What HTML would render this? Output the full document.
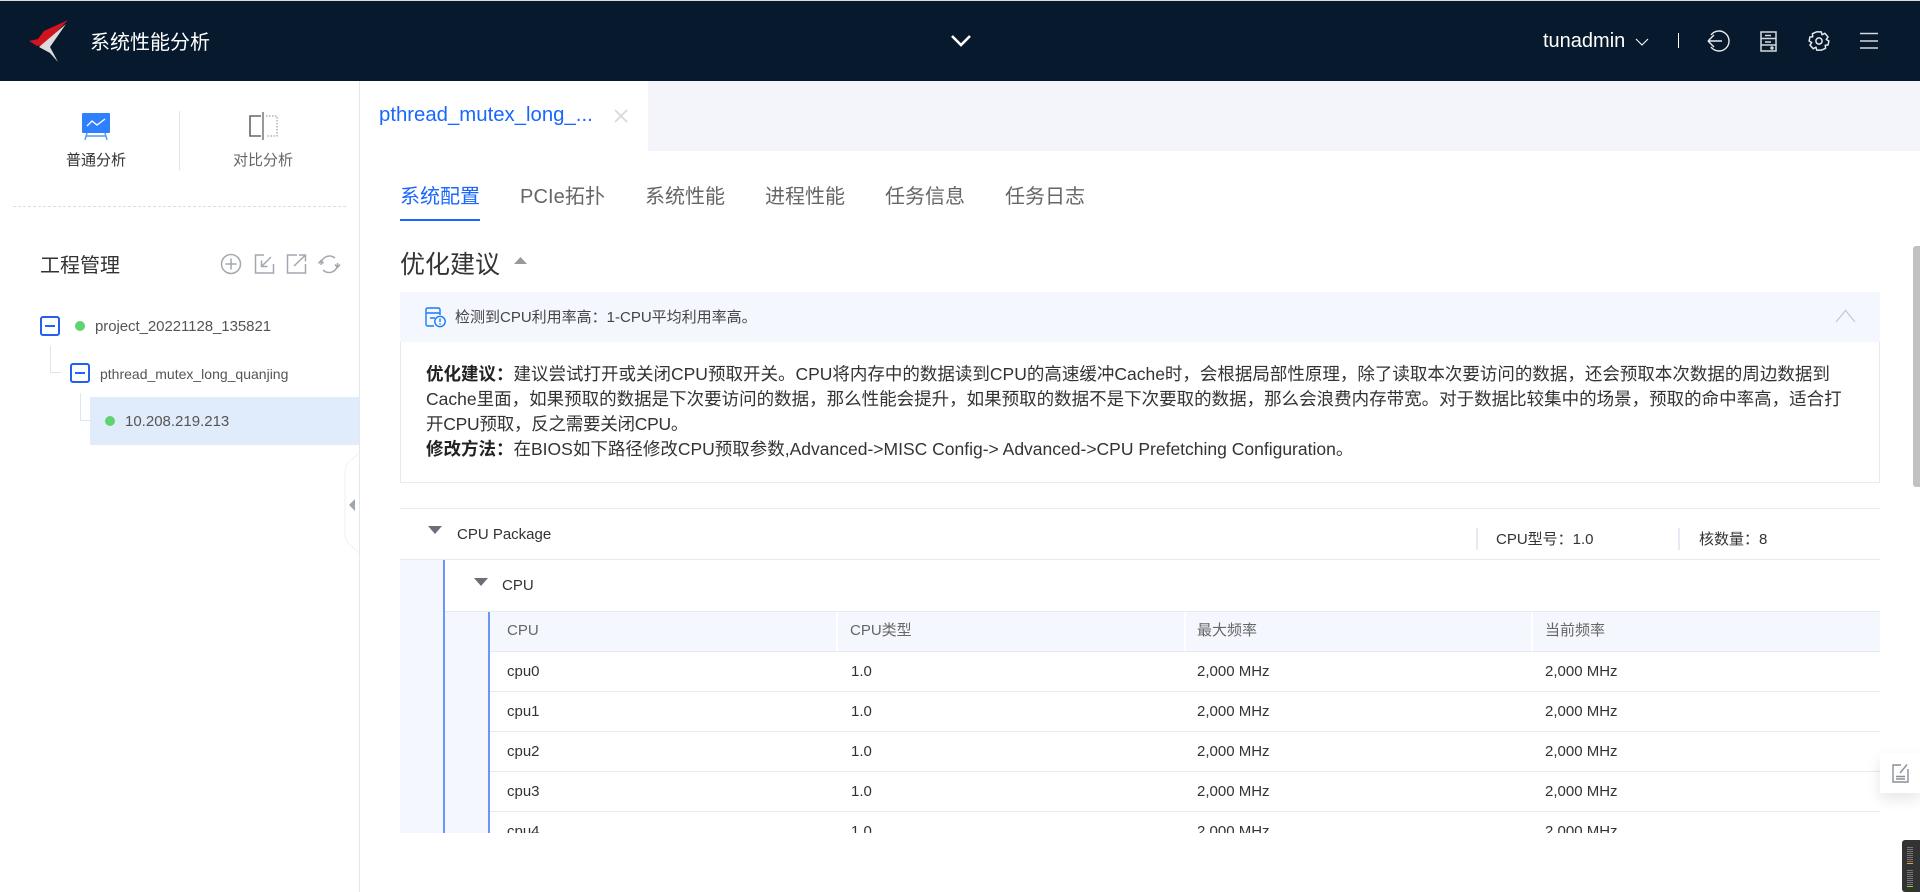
<!DOCTYPE html>
<html lang="zh">
<head>
<meta charset="utf-8">
<title>系统性能分析</title>
<style>
html,body{margin:0;padding:0;background:#fff;}
body{width:1920px;height:892px;position:relative;overflow:hidden;font-family:"Liberation Sans","Noto Sans CJK SC",sans-serif;color:#222;}
.a{position:absolute;}
.t{position:absolute;white-space:nowrap;line-height:20px;}
svg{position:absolute;overflow:visible;}
.b{position:absolute;background:#e6e9f2;}
.c{font-size:15px;color:#333;}
.h{font-size:15px;color:#666;}
</style>
</head>
<body>
<!-- header -->
<div class="a" style="left:0;top:0;width:1920px;height:1px;background:#ddd"></div>
<div class="a" style="left:0;top:1px;width:1920px;height:80px;background:#06192d"></div>
<svg style="left:0;top:0" width="90" height="81" viewBox="0 0 90 81">
<path d="M68 20L44 31L38 39L29 41L37 46L44 45Z" fill="#d3141f"/>
<path d="M66 24L39 47L50 53L58 62L50 47Z" fill="#dcdcdc"/>
</svg>
<div class="t" style="left:90px;top:33px;font-size:20px;color:#fff">系统性能分析</div>
<svg style="left:950px;top:34px" width="22" height="14"><path d="M2 2L11 11L20 2" fill="none" stroke="#fff" stroke-width="2.6"/></svg>
<div class="t" style="left:1543px;top:31px;font-size:20px;color:#fff">tunadmin</div>
<svg style="left:1634px;top:37px" width="16" height="11"><path d="M2 2L8 8L14 2" fill="none" stroke="#fff" stroke-width="1.1"/></svg>
<div class="a" style="left:1678px;top:33px;width:1px;height:15px;background:#fff"></div>
<svg style="left:1706px;top:29px" width="24" height="24" fill="none" stroke="#e8ebee" stroke-width="1.4"><path d="M5 6A10 10 0 1 1 5 18M2 12L8 6M2 12L8 18M2 12H16"/></svg>
<svg style="left:1759px;top:30px" width="20" height="22" fill="none" stroke="#d5d9dd" stroke-width="1.5"><path d="M2 2H17V21H2ZM2 8.5H17M2 15H17M6 5.5H12M6 12H12"/><circle cx="13" cy="18" r="1" fill="#d5d9dd"/></svg>
<svg style="left:1808px;top:30px" width="22" height="22" viewBox="0 0 24 24" fill="none" stroke="#e8ebee" stroke-width="1.6"><circle cx="12" cy="12" r="3.4"/><path d="M9.5 2H14.5L15.3 5.2L18.3 3.6L21.9 7.6L19.9 10.3L22.8 12L21.9 16.4L18.8 16.6L19.2 20L14.5 22H9.5L8.7 18.8L5.7 20.4L2.1 16.4L4.1 13.7L1.2 12L2.1 7.6L5.2 7.4L4.8 4Z" stroke-linejoin="round"/></svg>
<svg style="left:1860px;top:32px" width="19" height="18" fill="none" stroke="#d5d9dd" stroke-width="1.6"><path d="M0 1.5H18M0 9H18M0 16H18"/></svg>

<!-- sidebar -->
<div class="a" style="left:359px;top:81px;width:1px;height:811px;background:#e4e7ee"></div>
<svg style="left:80px;top:111px" width="32" height="30"><rect x="2" y="2" width="28" height="20" rx="1" fill="#2f80ff"/><path d="M7 15L12 10L17 14L25 8" fill="none" stroke="#fff" stroke-width="1.3"/><path d="M7 22L5 29M25 22L27 29M6 25H26" fill="none" stroke="#5794f7" stroke-width="1.4"/></svg>
<div class="t" style="left:66px;top:151px;font-size:15px;color:#333">普通分析</div>
<div class="a" style="left:179px;top:111px;width:1px;height:59px;background:#dfe3ea"></div>
<svg style="left:248px;top:111px" width="32" height="30" fill="none"><path d="M13 5H2V25H13" stroke="#666" stroke-width="1.6"/><path d="M15 1V29" stroke="#555" stroke-width="1.2"/><path d="M18 5H29V25H18" stroke="#888" stroke-width="1" stroke-dasharray="1.5 1.5"/></svg>
<div class="t" style="left:233px;top:151px;font-size:15px;color:#666">对比分析</div>
<div class="a" style="left:13px;top:206px;width:333px;border-top:1px dashed #d9dde4"></div>
<div class="t" style="left:40px;top:256px;font-size:20px;color:#333">工程管理</div>
<svg style="left:218px;top:252px" width="124" height="26" fill="none" stroke="#a3a8b0" stroke-width="1.5">
<circle cx="13" cy="12" r="9.5"/><path d="M13 6.5V17.5M7.5 12H18.5"/>
<path d="M46 3H37.5V21H55.5V12M53 5L43.5 14.5M43.5 8.5V14.5H49.5"/>
<path d="M79 3H69.5V21H87.5V12M76 14L87 3.5M81 3H87.5V9.5"/>
<path d="M103 13A8.5 8.5 0 0 1 117 6M119.5 11A8.5 8.5 0 0 1 105 18M100.5 11.5L103 8.5L105.5 11.5M117 12.5L119.5 15.5L122 12.5"/>
</svg>

<!-- tree -->
<div class="a" style="left:40px;top:316px;width:16px;height:16px;border:2px solid #2160f0;border-radius:3px"></div>
<div class="a" style="left:45px;top:325px;width:10px;height:2px;background:#1a66ff"></div>
<div class="a" style="left:75px;top:321px;width:10px;height:10px;border-radius:50%;background:#5ed36f"></div>
<div class="t" style="left:95px;top:317px;font-size:15px;color:#555;letter-spacing:-.06px">project_20221128_135821</div>
<div class="a" style="left:50px;top:346px;width:10px;height:26px;border-left:1px solid #dfe4ee;border-bottom:1px solid #dfe4ee"></div>
<div class="a" style="left:70px;top:363px;width:16px;height:16px;border:2px solid #2160f0;border-radius:3px"></div>
<div class="a" style="left:75px;top:372px;width:10px;height:2px;background:#1a66ff"></div>
<div class="t" style="left:100px;top:364px;font-size:14px;color:#555">pthread_mutex_long_quanjing</div>
<div class="a" style="left:80px;top:393px;width:10px;height:27px;border-left:1px solid #dfe4ee;border-bottom:1px solid #dfe4ee"></div>
<div class="a" style="left:90px;top:397px;width:269px;height:48px;background:#e0ebfb"></div>
<div class="a" style="left:105px;top:416px;width:10px;height:10px;border-radius:50%;background:#5ed36f"></div>
<div class="t" style="left:125px;top:412px;font-size:15px;color:#555">10.208.219.213</div>
<svg style="left:342px;top:450px" width="18" height="106"><path d="M17 3L7 12Q3 16 3 22V84Q3 90 7 94L17 103" fill="#fff" stroke="#f1f2f6"/><path d="M13 49V61L7 55Z" fill="#a0a5b2"/></svg>

<!-- tab bar -->
<div class="a" style="left:360px;top:81px;width:1560px;height:70px;background:#f3f5fa"></div>
<div class="a" style="left:360px;top:81px;width:288px;height:70px;background:#fff"></div>
<div class="t" style="left:379px;top:105px;font-size:20.35px;color:#1a66ff">pthread_mutex_long_...</div>
<svg style="left:613px;top:108px" width="16" height="16"><path d="M2 2L14 14M14 2L2 14" stroke="#d5d7db" stroke-width="1.6"/></svg>

<div class="t" style="left:400px;top:187px;font-size:20px;color:#1a66ff">系统配置</div>
<div class="a" style="left:400px;top:219px;width:80px;height:2px;background:#1a66ff"></div>
<div class="t" style="left:520px;top:187px;font-size:20px;color:#666;letter-spacing:.1px">PCIe拓扑</div>
<div class="t" style="left:645px;top:187px;font-size:20px;color:#666">系统性能</div>
<div class="t" style="left:765px;top:187px;font-size:20px;color:#666">进程性能</div>
<div class="t" style="left:885px;top:187px;font-size:20px;color:#666">任务信息</div>
<div class="t" style="left:1005px;top:187px;font-size:20px;color:#666">任务日志</div>

<div class="t" style="left:400px;top:253px;font-size:25px;line-height:24px;color:#333">优化建议</div>
<svg style="left:514px;top:257px" width="13" height="7"><path d="M6.5 0L13 7H0Z" fill="#999"/></svg>

<!-- alert -->
<div class="a" style="left:400px;top:292px;width:1480px;height:50px;background:#f4f7fd"></div>
<svg style="left:424px;top:306px" width="23" height="22" fill="none" stroke="#1a7cf5" stroke-width="1.4"><path d="M10 20H4Q2 20 2 18V4Q2 2 4 2H14Q16 2 16 4V9"/><path d="M2 7H16M6 12H11"/><circle cx="16" cy="15.5" r="5.2"/><path d="M16 12.5V16M16 17.4V18.6"/></svg>
<div class="t" style="left:455px;top:308px;font-size:15px;color:#444">检测到CPU利用率高：1-CPU平均利用率高。</div>
<svg style="left:1835px;top:309px" width="21" height="14"><path d="M1 13L10.5 1.5L20 13" fill="none" stroke="#c4c7cd" stroke-width="1.2"/></svg>
<div class="a" style="left:400px;top:342px;width:1478px;height:140px;border:1px solid #e6e9f2;border-top:0"></div>
<div class="t" style="left:426px;top:362px;font-size:17.5px;line-height:25px;color:#333"><b style="color:#222">优化建议：</b>建议尝试打开或关闭CPU预取开关。CPU将内存中的数据读到CPU的高速缓冲Cache时，会根据局部性原理，除了读取本次要访问的数据，还会预取本次数据的周边数据到<br>Cache里面，如果预取的数据是下次要访问的数据，那么性能会提升，如果预取的数据不是下次要取的数据，那么会浪费内存带宽。对于数据比较集中的场景，预取的命中率高，适合打<br><span style="letter-spacing:-.25px">开CPU预取，反之需要关闭CPU。</span><br><b style="color:#222">修改方法：</b>在BIOS如下路径修改CPU预取参数,Advanced-&gt;MISC Config-&gt; Advanced-&gt;CPU Prefetching Configuration。</div>

<!-- scrollbar -->
<div class="a" style="left:1913px;top:246px;width:7px;height:241px;background:#c1c1c1;border-radius:3px 0 0 3px"></div>

<!-- details -->
<div class="b" style="left:400px;top:508px;width:1480px;height:1px"></div>
<svg style="left:428px;top:526px" width="14" height="8"><path d="M0 0H14L7 8Z" fill="#6b6f78"/></svg>
<div class="t" style="left:457px;top:525px;font-size:15px;color:#333">CPU Package</div>
<div class="b" style="left:1476px;top:528px;width:2px;height:22px"></div>
<div class="t" style="left:1496px;top:530px;font-size:15px;color:#333">CPU型号：1.0</div>
<div class="b" style="left:1678px;top:528px;width:2px;height:22px"></div>
<div class="t" style="left:1699px;top:530px;font-size:15px;color:#333">核数量：8</div>
<div class="b" style="left:400px;top:559px;width:1480px;height:1px"></div>

<div class="a" style="left:400px;top:560px;width:1480px;height:273px;overflow:hidden">
  <div class="a" style="left:0;top:0;width:43px;height:273px;background:#f4f7fd"></div>
  <div class="a" style="left:43px;top:0;width:2px;height:273px;background:#6d94f8"></div>
  <svg style="left:74px;top:18px" width="14" height="8"><path d="M0 0H14L7 8Z" fill="#6b6f78"/></svg>
  <div class="t" style="left:102px;top:16px;font-size:15px;color:#333">CPU</div>
  <div class="b" style="left:45px;top:51px;width:1435px;height:1px"></div>
  <div class="a" style="left:45px;top:52px;width:43px;height:221px;background:#f4f7fd"></div>
  <div class="a" style="left:88px;top:52px;width:2px;height:221px;background:#6d94f8"></div>
  <div class="a" style="left:90px;top:52px;width:1390px;height:39px;background:#f4f7fd"></div>
  <div class="a" style="left:436px;top:52px;width:2px;height:39px;background:#fff"></div>
  <div class="a" style="left:784px;top:52px;width:2px;height:39px;background:#fff"></div>
  <div class="a" style="left:1131px;top:52px;width:2px;height:39px;background:#fff"></div>
  <div class="t h" style="left:107px;top:61px">CPU</div>
  <div class="t h" style="left:450px;top:61px">CPU类型</div>
  <div class="t h" style="left:797px;top:61px">最大频率</div>
  <div class="t h" style="left:1145px;top:61px">当前频率</div>
  <div class="b" style="left:90px;top:91px;width:1390px;height:1px"></div>
  <div class="b" style="left:90px;top:131px;width:1390px;height:1px"></div>
  <div class="b" style="left:90px;top:171px;width:1390px;height:1px"></div>
  <div class="b" style="left:90px;top:211px;width:1390px;height:1px"></div>
  <div class="b" style="left:90px;top:251px;width:1390px;height:1px"></div>

  <div class="t c" style="left:107px;top:102px">cpu0</div><div class="t c" style="left:451px;top:102px">1.0</div><div class="t c" style="left:797px;top:102px">2,000 MHz</div><div class="t c" style="left:1145px;top:102px">2,000 MHz</div>
  <div class="t c" style="left:107px;top:142px">cpu1</div><div class="t c" style="left:451px;top:142px">1.0</div><div class="t c" style="left:797px;top:142px">2,000 MHz</div><div class="t c" style="left:1145px;top:142px">2,000 MHz</div>
  <div class="t c" style="left:107px;top:182px">cpu2</div><div class="t c" style="left:451px;top:182px">1.0</div><div class="t c" style="left:797px;top:182px">2,000 MHz</div><div class="t c" style="left:1145px;top:182px">2,000 MHz</div>
  <div class="t c" style="left:107px;top:222px">cpu3</div><div class="t c" style="left:451px;top:222px">1.0</div><div class="t c" style="left:797px;top:222px">2,000 MHz</div><div class="t c" style="left:1145px;top:222px">2,000 MHz</div>
  <div class="t c" style="left:107px;top:262px">cpu4</div><div class="t c" style="left:451px;top:262px">1.0</div><div class="t c" style="left:797px;top:262px">2,000 MHz</div><div class="t c" style="left:1145px;top:262px">2,000 MHz</div>
</div>

<!-- float button -->
<div class="a" style="left:1880px;top:753px;width:40px;height:40px;background:#fff;box-shadow:0 6px 14px rgba(0,0,0,.1)"></div>
<svg style="left:1891px;top:763px" width="18" height="20" fill="none" stroke="#8a8e95" stroke-width="1.4"><path d="M10 2H2V19H17V6M16 1.5L9 10M5 13.5H14M5 16H14"/></svg>

<!-- bottom widget -->
<div class="a" style="left:1902px;top:840px;width:18px;height:52px;background:#333;border-radius:3px 0 0 3px"></div>
<div class="a" style="left:1907px;top:847px;width:6px;height:15px;background:repeating-linear-gradient(#777 0 1px,transparent 1px 2px)"></div>
<div class="a" style="left:1907px;top:863px;width:6px;height:1px;background:#f0a040"></div>
<div class="a" style="left:1907px;top:870px;width:6px;height:15px;background:repeating-linear-gradient(#777 0 1px,transparent 1px 2px)"></div>
<div class="a" style="left:1907px;top:886px;width:6px;height:1px;background:#7fe020"></div>
</body>
</html>
